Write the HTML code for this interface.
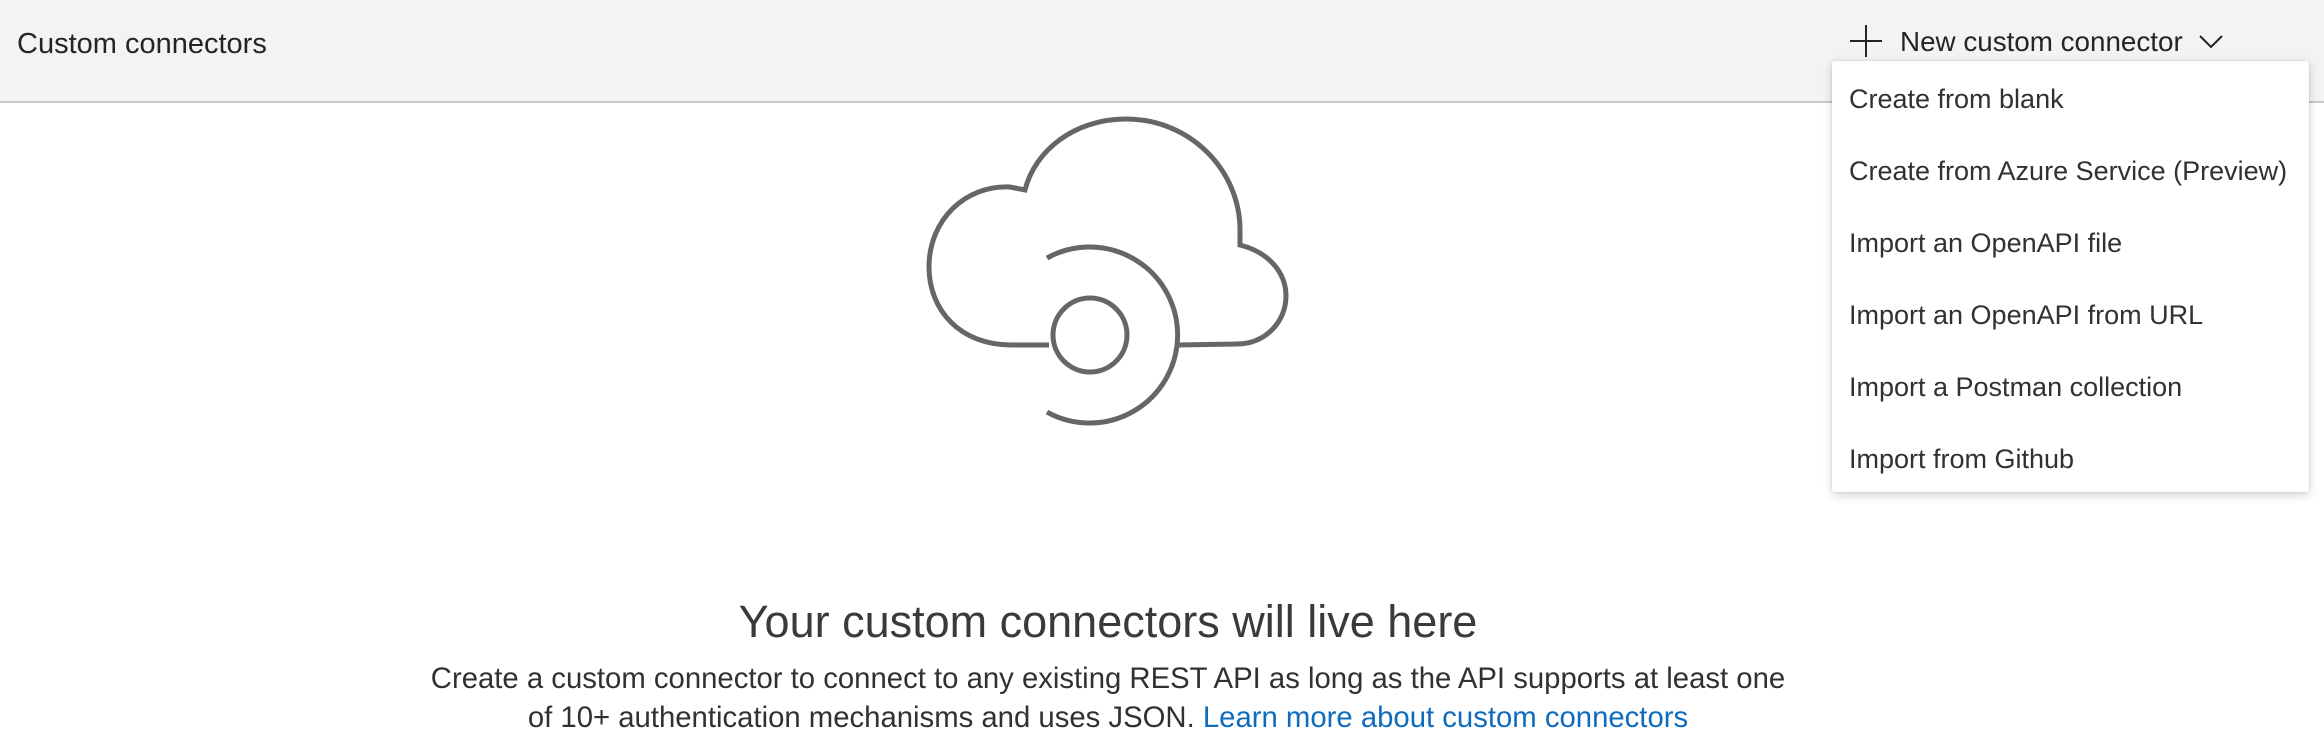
<!DOCTYPE html>
<html><head><meta charset="utf-8"><style>
*{margin:0;padding:0;box-sizing:border-box}
body{width:2324px;height:756px;background:#fff;font-family:"Segoe UI","Liberation Sans",sans-serif;color:#323130;position:relative;overflow:hidden}
.hdr{position:absolute;left:0;top:0;width:2324px;height:103px;background:#f3f3f3;border-bottom:2px solid #c8c8c8}
.title{position:absolute;left:17px;top:26px;font-size:29px;line-height:36px;color:#252423}
.btn{position:absolute;left:1900px;top:22px;font-size:27.8px;line-height:40px;color:#252423}
.menu{position:absolute;left:1832px;top:61px;width:477px;height:431px;background:#fff;border-radius:3px;box-shadow:0 3px 10px rgba(0,0,0,.18),0 0 2px rgba(0,0,0,.12)}
.menu div{position:absolute;left:17px;font-size:27px;line-height:36px;color:#323130;white-space:nowrap}
.h{position:absolute;left:0;width:2216px;text-align:center;top:594px;font-size:45px;font-weight:300;line-height:56px;color:#3b3a39}
.p{position:absolute;left:0;width:2216px;text-align:center;top:659px;font-size:29.3px;line-height:39px;color:#323130}
.p a{color:#0f6cbd;text-decoration:none}
</style></head><body>
<div class="hdr"><div class="title">Custom connectors</div></div>
<svg style="position:absolute;left:0;top:0" width="2324" height="756">
<g stroke="#252423" stroke-width="2" fill="none">
<path d="M1850 41H1882M1866 25V57"/>
<path d="M2200 36L2211 47L2222 36"/>
</g>
<g stroke="#666" stroke-width="5" fill="none">
<path d="M1049,345 L1011,345 C960,345 929,310 929,267 C929,220 965,185 1010,187 L1025,190 C1035,150 1075,119 1126,119 C1190,119 1240,170 1240,230 L1240,245 C1268,252 1286,272 1286,296 C1286,322 1265,344 1237,344 L1178,345"/>
<circle cx="1090" cy="335" r="37"/>
<path d="M1047,258 A88,88 0 1 1 1047,412"/>
</g>
</svg>
<div class="btn">New custom connector</div>
<div class="menu">
<div style="top:20px">Create from blank</div>
<div style="top:92px">Create from Azure Service (Preview)</div>
<div style="top:164px">Import an OpenAPI file</div>
<div style="top:236px">Import an OpenAPI from URL</div>
<div style="top:308px">Import a Postman collection</div>
<div style="top:380px">Import from Github</div>
</div>
<div class="h">Your custom connectors will live here</div>
<div class="p">Create a custom connector to connect to any existing REST API as long as the API supports at least one<br>of 10+ authentication mechanisms and uses JSON. <a>Learn more about custom connectors</a></div>
</body></html>
